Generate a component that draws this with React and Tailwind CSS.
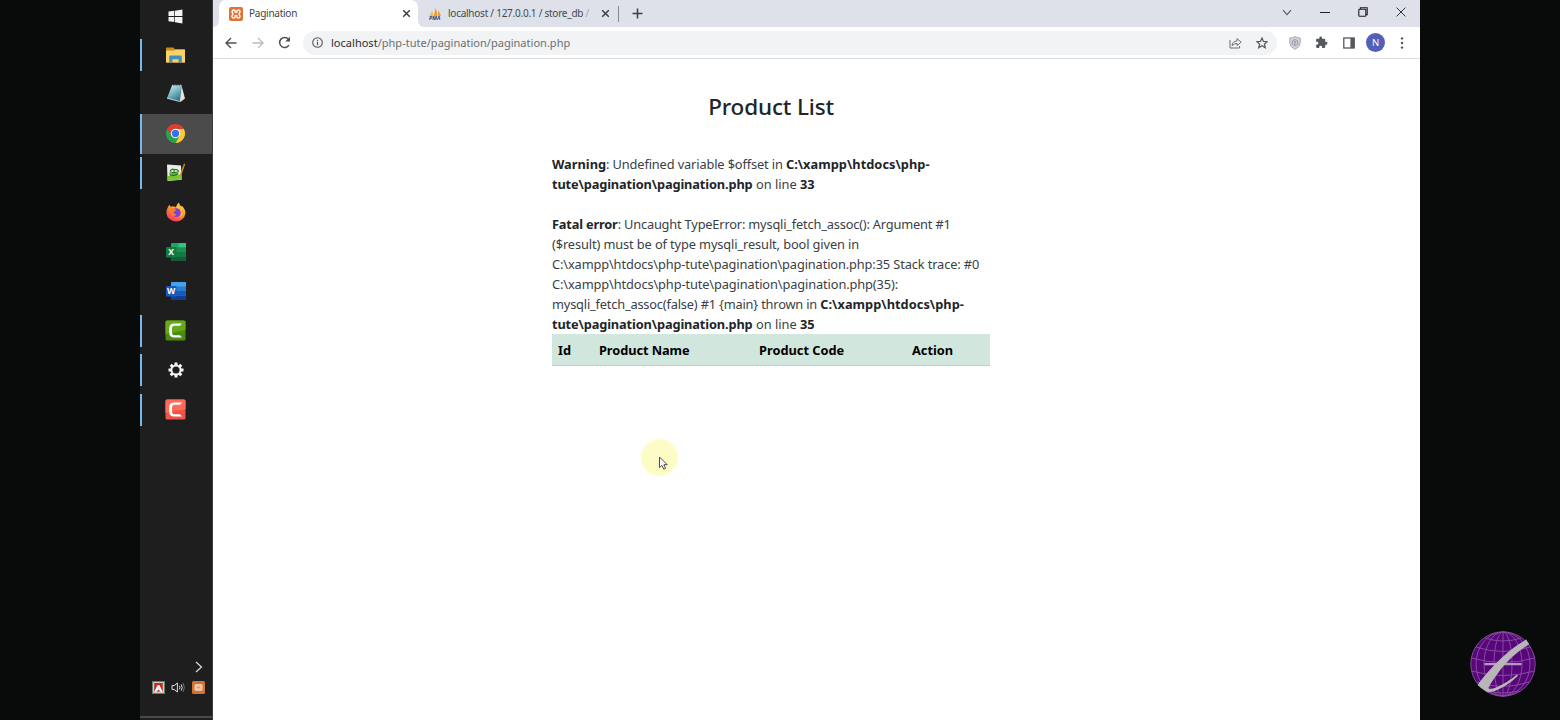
import React from "react";

/* ---------- taskbar icons ---------- */
const WindowsIcon = () => (
  <svg className="h-[15px] w-[15px]" viewBox="0 0 15 15" fill="#f4f4f4">
    <path d="M0.5 2.6 6.3 1.8V7.1H0.5zM7 1.7 14.4.6V7.1H7zM0.5 7.9H6.3V13.1L0.5 12.3zM7 7.9H14.4V14.4L7 13.3z" />
  </svg>
);
const ExplorerIcon = () => (
  <svg className="h-4 w-[19px]" viewBox="0 0 19 16">
    <path d="M0 1.2Q0 .4.8.4H7.4L9.2 2.4H18.2Q19 2.4 19 3.2V15.4H0z" fill="#c98a1c" />
    <path d="M0 3.6H8.2L9.6 2.4H19V15.4H0z" fill="#fad265" />
    <path d="M3.2 15.6V9.8Q3.2 8.4 4.6 8.4H14.4Q15.8 8.4 15.8 9.8V15.6H12.6V12.2H6.4V15.6z" fill="#3f8fc4" />
  </svg>
);
const NotepadIcon = () => (
  <svg className="h-[19px] w-5" viewBox="0 0 20 19">
    <defs>
      <linearGradient id="pad" x1="0" y1="0" x2=".6" y2="1">
        <stop offset="0" stopColor="#d8f0f4" />
        <stop offset=".5" stopColor="#7fb9c6" />
        <stop offset="1" stopColor="#2f7486" />
      </linearGradient>
    </defs>
    <path d="M15.6 1.8 19 14.6 14.4 18 13 15z" fill="#e7e2d6" />
    <path d="M6 1.5 16 1.8 13.8 17.5 1 14.2z" fill="url(#pad)" />
    <path d="M1 14.2 13.8 17.5" stroke="#cfe0e2" strokeWidth=".9" />
    <path d="M6 1.4H16" stroke="#b9c6c8" strokeWidth="1.2" strokeDasharray="1 .6" />
  </svg>
);
const ChromeIcon = () => (
  <svg className="h-[19px] w-[19px]" viewBox="0 0 48 48">
    <path d="M3.2 12A24 24 0 0 0 24 48L34.4 30 24 24z" fill="#2ba24c" />
    <path d="M44.8 12A24 24 0 0 1 24 48L34.4 30 24 12z" fill="#fcc934" />
    <path d="M3.2 12 13.6 30 24 24 24 12H44.8A24 24 0 0 0 3.2 12z" fill="#e33b2e" />
    <circle cx="24" cy="24" r="12" fill="#fff" />
    <circle cx="24" cy="24" r="9.3" fill="#2f76e8" />
  </svg>
);
const NotepadPlusIcon = () => (
  <svg className="h-[19px] w-5" viewBox="0 0 20 19">
    <path d="M1 1.4 15 2.4 15.6 16.8 1.6 18z" fill="#e9efe4" />
    <path d="M1.5 13 15.4 11.5 15.6 16.6 1.7 17.700z" fill="#7cc62c" />
    <path d="M3.4 9.500Q4 5.400 7.500 6 12.600 5.500 12.500 9.400 12.800 13.200 9 13.600 5 14.600 3.400 12z" fill="#6cb944" />
    <path d="M4 7.600Q7 4.600 9 6.800 12 5.600 12.600 8.800M4 11.800Q8 13.800 12 10.800M6 9.600H10.500" stroke="#23602a" strokeWidth="1" fill="none" />
    <circle cx="6.400" cy="8.200" r=".9" fill="#eaf6dc" />
    <circle cx="9.900" cy="8.200" r=".9" fill="#eaf6dc" />
    <path d="M18.6 .8 14.400 12.8" stroke="#c98a2b" strokeWidth="1.400" />
  </svg>
);
const FirefoxIcon = () => (
  <svg className="h-5 w-5" viewBox="0 0 20 20">
    <defs>
      <linearGradient id="fox" x1=".85" y1="0" x2=".25" y2="1">
        <stop offset="0" stopColor="#ffe14a" />
        <stop offset=".45" stopColor="#ff9a2a" />
        <stop offset="1" stopColor="#f5325b" />
      </linearGradient>
    </defs>
    <path d="M2.2 4.6Q2.5 3.6 3.4 2.7 3.9 4 5 4.8 6.4 4 7.8 4.6 9.6 4.8 10 5.4 10.6 1.8 13 .4 13.2 2.8 15.3 4.4L16 3.8Q19.6 7.6 19.4 11.6A9.5 8.8 0 0 1 .5 11.4Q.3 7.6 2.2 4.6z" fill="url(#fox)" />
    <circle cx="10.4" cy="10.6" r="4.3" fill="#7b3fe0" />
    <path d="M4.4 6.4Q7.4 5.4 9.4 7.4 11 8 9.4 8.9 7.6 9 7.6 10.4 8 12.4 10.4 12.2 8.6 15.4 5.4 13.4 3.4 11 4.4 6.4z" fill="#ff7a2c" />
    <path d="M10 5.4Q14.6 5.8 15.2 10.6 15.4 13.6 13 15.4 17.8 13.4 16.2 8.4 14.4 4.6 13 2.6 10.6 3.4 10 5.4z" fill="#ffbf3a" />
  </svg>
);
const OfficeIcon = ({ letter, tones }) => (
  <svg className="h-5 w-5" viewBox="0 0 20 20">
    <rect x="5" y="1" width="15" height="18" rx="1" fill={tones[0]} />
    <rect x="12.5" y="1" width="7.5" height="4.5" fill={tones[1]} />
    <rect x="5" y="5.5" width="15" height="4.5" fill={tones[2]} />
    <rect x="5" y="10" width="15" height="4.5" fill={tones[3]} />
    <rect x="5" y="14.5" width="15" height="4.5" rx=".8" fill={tones[4]} />
    <rect x="0" y="5" width="10.5" height="10.4" rx=".9" fill={tones[5]} />
    <text x="5.2" y="13.4" textAnchor="middle" fontSize="8.6" fontWeight="700" fill="#fff" fontFamily="Open Sans, sans-serif">{letter}</text>
  </svg>
);
const EXCEL = ["#21a366", "#33c481", "#1a9058", "#107c41", "#185c37", "#107c41"];
const WORD = ["#41a5ee", "#41a5ee", "#2b7cd3", "#185abd", "#103f91", "#185abd"];
const CamtasiaIcon = ({ from, to }) => (
  <svg className="h-[21px] w-[21px]" viewBox="0 0 21 21">
    <rect x=".5" y=".5" width="20" height="20" rx="1.6" fill={to} />
    <path d="M2.1.5H18.9Q20.5.5 20.5 2.1V10L.5 14V2.1Q.5.5 2.1.5z" fill={from} />
    <path d="M17 3.400H9.200Q4.200 3.400 4.200 8.400V12.600Q4.200 17.600 9.200 17.600H17L15 15.200H9.800Q7 15.200 7 12.400V8.600Q7 5.800 9.800 5.800H15z" fill="#fff" />
  </svg>
);
const GearIcon = () => (
  <svg className="h-4 w-4" viewBox="0 0 16 16" fill="none" stroke="#f6f6f6">
    <circle cx="8" cy="8" r="4.600" strokeWidth="2" />
    <path d="M8 .5V3.200M8 12.800V15.500M.5 8H3.200M12.800 8H15.500M2.700 2.700 4.600 4.600M11.400 11.400 13.300 13.300M2.700 13.300 4.600 11.400M11.400 4.600 13.300 2.700" strokeWidth="3" />
  </svg>
);

const TASKS = [
  { icon: <ExplorerIcon />, open: true },
  { icon: <NotepadIcon /> },
  { icon: <ChromeIcon />, active: true },
  { icon: <NotepadPlusIcon />, open: true },
  { icon: <FirefoxIcon /> },
  { icon: <OfficeIcon letter="X" tones={EXCEL} /> },
  { icon: <OfficeIcon letter="W" tones={WORD} /> },
  { icon: <CamtasiaIcon from="#65a818" to="#4a8c10" />, open: true },
  { icon: <GearIcon />, open: true },
  { icon: <CamtasiaIcon from="#ff6b5a" to="#ee5546" />, open: true },
];

function Taskbar() {
  return (
    <aside className="flex w-[73px] shrink-0 flex-col border-r border-[#3b3b3b] bg-[#1e1e1e]">
      <div className="flex h-[35.4px] shrink-0 items-center justify-center pr-px pb-[3px]">
        <WindowsIcon />
      </div>
      {TASKS.map((t, i) => (
        <div key={i} className={t.active ? "flex h-[39.4px] shrink-0 items-center bg-[#4b4b4b]" : "flex h-[39.4px] shrink-0 items-center"}>
          <div className={t.active ? "h-full w-[2px] bg-[#76b9ed]" : t.open ? "h-8 w-[2px] bg-[#76b9ed]" : "h-8 w-[2px]"} />
          <div className="flex flex-1 justify-center pr-[3px] pb-px">{t.icon}</div>
        </div>
      ))}
      <div className="mt-auto flex flex-col">
        <svg className="ml-[54px] h-3 w-[9px]" viewBox="0 0 9 12" fill="none" stroke="#dcdcdc" strokeWidth="1.2"><path d="M2 1 7.500 6 2 11" /></svg>
        <div className="mt-[8px] flex items-center pl-3">
          <svg className="h-[13px] w-[13px]" viewBox="0 0 13 13">
            <rect width="13" height="13" fill="#4e8a6c" />
            <rect x="1.2" y="1.2" width="10.6" height="10.6" fill="#f1dcda" />
            <path d="M2.2 2H10.800V10.600H2.200z" fill="#c9262c" />
            <path d="M2.400 10.800 5.400 4.200H7.600L10.600 10.800H8.600L6.500 8.400 4.400 10.800z" fill="#fff" />
          </svg>
          <svg className="ml-[6px] h-[13px] w-[15px]" viewBox="0 0 15 13" fill="none" stroke="#dedede" strokeWidth="1">
            <path d="M1 4.6H3.2L6.4 2V11L3.2 8.4H1z" />
            <path d="M8.4 4.8Q9.6 6.5 8.4 8.2M10.2 3.4Q12.2 6.5 10.2 9.6" />
            <path d="M12 2Q14.8 6.5 12 11" stroke="#707070" />
          </svg>
          <svg className="ml-[6px] h-[13px] w-[13px]" viewBox="0 0 13 13">
            <rect width="13" height="13" rx="1.5" fill="#cf7437" />
            <rect x="2.4" y="3" width="8.2" height="7" rx="1.6" fill="#efc3a2" />
            <path d="M5.2 6.5H7.8" stroke="#dd9562" strokeWidth="1.2" />
          </svg>
        </div>
        <div className="mt-[22px] h-[2px] bg-[#4a4a4a]" />
        <div className="h-[2px]" />
      </div>
    </aside>
  );
}

/* ---------- browser chrome ---------- */
const XamppIcon = () => (
  <svg className="h-[14px] w-[14px]" viewBox="0 0 14 14">
    <rect width="14" height="14" rx="2" fill="#df7436" />
    <path d="M4.700 3A1.700 1.700 0 0 0 3.600 6Q4.400 7 3.600 8A1.700 1.700 0 1 0 6.200 10V8.600H7.800V10A1.700 1.700 0 1 0 10.400 8Q9.600 7 10.400 6A1.700 1.700 0 1 0 7.800 4V5.400H6.200V4A1.500 1.500 0 0 0 4.700 3z" fill="none" stroke="#fff" strokeWidth="1.300" />
  </svg>
);
const PmaIcon = () => (
  <svg className="h-[14px] w-[14px]" viewBox="0 0 14 14">
    <path d="M1 9.4Q3.6 7 4 3.2 5.2 5.6 4.8 9z" fill="#f5b35c" />
    <path d="M5 9.4Q7.4 6 6.8 1 9.6 4.4 9.2 9.2z" fill="#f29a2c" />
    <path d="M9.8 9.2Q10.6 6 10 3.2 12.6 6 12.8 9z" fill="#f29a2c" />
    <text x="6.800" y="13" textAnchor="middle" fontSize="5.400" fontWeight="700" fontStyle="italic" fill="#3f3d63" fontFamily="Open Sans, sans-serif">PMA</text>
  </svg>
);
const Cross = () => (
  <svg className="h-[9px] w-[9px]" viewBox="0 0 9 9" stroke="#3c4043" strokeWidth="1.5"><path d="M1.2 1.2 7.8 7.8M7.8 1.2 1.2 7.8" /></svg>
);

function TabStrip() {
  return (
    <div className="flex h-[27px] bg-[#dee1ea]">
      <div className="flex w-[6px] items-end bg-white"><div className="h-full w-full rounded-br-[6px] bg-[#dee1ea]" /></div>
      <div className="flex w-[199px] items-center rounded-t-[7px] bg-white pl-[10px]">
        <XamppIcon />
        <span className="ml-[6px] pb-px text-[10px] leading-[14px] tracking-[-0.25px] text-[#3f4347]">Pagination</span>
        <span className="mr-[7px] ml-auto"><Cross /></span>
      </div>
      <div className="flex w-[6px] bg-white"><div className="h-full w-full rounded-bl-[6px] bg-[#dee1ea]" /></div>
      <div className="flex flex-1 items-center">
        <span className="ml-[4px]"><PmaIcon /></span>
        <span className="ml-[6px] w-[143px] pb-px text-[10px] leading-[14px] tracking-[-0.25px] whitespace-nowrap text-[#45494d]">
          localhost / 127.0.0.1 / store_db <span className="text-[#a3a6ad]">/</span>
        </span>
        <span className="ml-[10px]"><Cross /></span>
        <span className="ml-[8px] h-4 w-px bg-[#85888e]" />
        <svg className="ml-[13px] h-[11px] w-[11px]" viewBox="0 0 11 11" stroke="#3c4043" strokeWidth="1.5"><path d="M5.5.5V10.5M.5 5.5H10.5" /></svg>
        <div className="mr-[14px] ml-auto flex items-center pb-[3px]">
          <svg className="h-[7px] w-[10px]" viewBox="0 0 10 7" fill="none" stroke="#55585e" strokeWidth="1.1"><path d="M1 1.2 5 5.6 9 1.2" /></svg>
          <span className="ml-[28px] h-px w-[10px] bg-[#222]" />
          <svg className="ml-[28px] h-[10px] w-[10px]" viewBox="0 0 10 10" fill="none" stroke="#1b1b1b" strokeWidth="1.1"><rect x=".8" y="2.2" width="7" height="7" rx=".8" /><path d="M2.4 2V.8H9.2V7.8H8" /></svg>
          <svg className="ml-[28px] h-[10px] w-[10px]" viewBox="0 0 10 10" stroke="#333" strokeWidth="1"><path d="M.6.6 9.4 9.4M9.4.6.6 9.4" /></svg>
        </div>
      </div>
    </div>
  );
}

function Toolbar() {
  return (
    <div className="flex h-8 items-center border-b border-[#dcdde0] bg-white pl-[12px]">
      <svg className="h-3 w-3" viewBox="0 0 12 12" fill="none" stroke="#4c4f54" strokeWidth="1.4"><path d="M11.5 6H1.2M6 1 1 6 6 11" /></svg>
      <svg className="ml-[15px] h-3 w-3" viewBox="0 0 12 12" fill="none" stroke="#b9bbbf" strokeWidth="1.3"><path d="M.5 6H10.8M6 1 11 6 6 11" /></svg>
      <svg className="ml-[14px] h-[13px] w-[13px]" viewBox="0 0 13 13"><path d="M10.9 9.2A5 5 0 1 1 10.4 3.2" fill="none" stroke="#4c4f54" strokeWidth="1.5" /><path d="M12 .8V5.6H7.2z" fill="#4c4f54" /></svg>
      <div className="ml-[12px] flex h-6 w-[974px] items-center rounded-full bg-[#f1f3f4] pl-[9px]">
        <svg className="h-[11px] w-[11px]" viewBox="0 0 11 11"><circle cx="5.5" cy="5.5" r="4.8" fill="none" stroke="#55585d" strokeWidth="1.1" /><path d="M5.5 4.8V8.2M5.5 2.7V3.9" stroke="#55585d" strokeWidth="1.2" /></svg>
        <span className="ml-[8px] text-[11px] leading-4 tracking-[0.02px] whitespace-nowrap text-[#6b6f74]"><span className="text-[#2b2e31]">localhost</span>/php-tute/pagination/pagination.php</span>
        <svg className="mr-[14px] ml-auto h-3 w-[13px]" viewBox="0 0 13 12" fill="none" stroke="#6c6f74" strokeWidth="1"><path d="M1 3V11H10.6V9" /><path d="M3 8.6Q3.4 4.2 8 4V1.6L12.2 5.2 8 8.6V6.4Q5 6.4 3 8.6z" strokeLinejoin="round" /></svg>
        <svg className="mr-[9px] h-[12px] w-[12px]" viewBox="0 0 12 12" fill="none" stroke="#54575c" strokeWidth="1.2"><path d="M6 1 7.5 4.4 11.2 4.7 8.4 7.1 9.3 10.8 6 8.8 2.7 10.8 3.6 7.1.8 4.7 4.5 4.4z" /></svg>
      </div>
      <svg className="ml-[12px] h-[14px] w-[12px]" viewBox="0 0 12 14"><path d="M6 .6Q8.4 2 11.2 2V7Q11 11 6 13.4 1 11 .8 7V2Q3.6 2 6 .6z" fill="#d2d4dc" stroke="#a6a9b5" strokeWidth="1" /><circle cx="6" cy="6.6" r="2.9" fill="none" stroke="#8f93a1" strokeWidth=".9" /><path d="M6 5V9M4.6 6H7.4" stroke="#8f93a1" strokeWidth=".9" /></svg>
      <svg className="ml-[14px] h-[13px] w-[13px]" viewBox="0 0 24 24" fill="#55585d"><path d="M20.5 11H19V7c0-1.100-.9-2-2-2h-4V3.500a2.500 2.500 0 0 0-5 0V5H4c-1.100 0-2 .9-2 2v3.800h1.500a2.700 2.700 0 0 1 0 5.400H2V20c0 1.100.9 2 2 2h3.800v-1.500a2.700 2.700 0 0 1 5.400 0V22H17c1.100 0 2-.9 2-2v-4h1.500a2.500 2.500 0 0 0 0-5z" /></svg>
      <svg className="ml-[15px] h-3 w-3" viewBox="0 0 12 12"><rect x=".8" y="1" width="10.4" height="10" fill="none" stroke="#55585d" strokeWidth="1.3" /><rect x="7.4" y="1" width="4" height="10" fill="#55585d" /></svg>
      <div className="ml-[11px] flex h-[19px] w-[19px] items-center justify-center rounded-full bg-[#5360b5] text-[9.5px] leading-none text-white">N</div>
      <svg className="ml-[15px] h-3 w-[4px]" viewBox="0 0 4 12" fill="#505358"><circle cx="2" cy="1.4" r="1.2" /><circle cx="2" cy="6" r="1.2" /><circle cx="2" cy="10.600" r="1.2" /></svg>
    </div>
  );
}

/* ---------- page ---------- */
const ScriptPath = () => <b className="tracking-[0.03px]">C:\xampp\htdocs\php-</b>;
const LineRef = ({ line }) => (
  <div><b className="tracking-[-0.13px]">tute\pagination\pagination.php</b> on line <b>{line}</b></div>
);

function Page() {
  return (
    <main className="relative flex-1 bg-white">
      <div className="ml-[339px] flex w-[438px] flex-col text-[#212529]">
        <h1 className="mt-[33px] text-center text-[22.5px] leading-[30px] font-medium tracking-[-0.17px]">Product List</h1>
        <div className="mt-8 text-[12.8px] leading-5 whitespace-nowrap text-[#3a4046] [&_b]:text-[#212529]">
          <div className="tracking-[-0.13px]"><b className="tracking-normal">Warning</b>: Undefined variable $offset in <ScriptPath /></div>
          <LineRef line={33} />
          <div className="h-5" />
          <div className="tracking-[-0.18px]"><b>Fatal error</b>: Uncaught TypeError: mysqli_fetch_assoc(): Argument #1</div>
          <div className="tracking-[-0.11px]">($result) must be of type mysqli_result, bool given in</div>
          <div className="tracking-[-0.12px]">C:\xampp\htdocs\php-tute\pagination\pagination.php:35 Stack trace: #0</div>
          <div className="tracking-[-0.11px]">C:\xampp\htdocs\php-tute\pagination\pagination.php(35):</div>
          <div className="tracking-[-0.18px]">mysqli_fetch_assoc(false) #1 {"{main}"} thrown in <ScriptPath /></div>
          <LineRef line={35} />
        </div>
        <div className="grid h-8 grid-cols-[40px_161px_153px_84px] items-center border-b border-[#bcd0c7] bg-[#d1e7dd] pt-[2px] text-[12.8px] font-bold text-black">
          <span className="pl-[6px]">Id</span>
          <span className="pl-[7px] tracking-[-0.08px]">Product Name</span>
          <span className="pl-[6px]">Product Code</span>
          <span className="pl-[6px]">Action</span>
        </div>
      </div>
      <div className="absolute top-[380px] left-[428px] h-[37px] w-[37px] rounded-full bg-[#fdfcc4] blur-[0.8px]" />
      <svg className="absolute top-[397px] left-[446px] h-[15px] w-[10px]" viewBox="0 0 10 15"><path d="M.5 1V11.500L3 9.400 4.800 13.200 6.600 12.300 4.900 8.700H8.200z" fill="#fff" stroke="#3c3a36" strokeWidth=".9" /></svg>
    </main>
  );
}

const Globe = () => (
  <svg className="absolute right-[23px] bottom-[22px] h-[68px] w-[68px]" viewBox="0 0 68 68">
    <circle cx="34" cy="34" r="32" fill="#57077a" />
    <g fill="none" stroke="#864a9f" strokeWidth="1">
      <circle cx="34" cy="34" r="32.2" />
      <ellipse cx="34" cy="34" rx="9" ry="32" />
      <ellipse cx="34" cy="34" rx="19" ry="32" />
      <ellipse cx="34" cy="34" rx="27" ry="32" />
      <path d="M34 2V66M16 8Q34 14 52 8M7 17Q34 26 61 17M2.500 28Q34 37 65.500 28M2.500 41Q34 50 65.500 41M8 52Q34 61 60 52M18 61Q34 65 50 61" />
    </g>
    <path d="M15.500 33H52.500V35.300H15.500z" fill="#b39bbd" />
    <path d="M57.200 9.600 60.200 14.200Q44 24 32 39 20.500 54.500 19.500 58 20.500 60.200 28 57 38 53 48 44.600L48.800 46Q39 55.500 26 61 19.500 63 17.500 61.500 12 58.500 8.600 55 14 47 24 36.500 40 19 57.200 9.600z" fill="#b9b6b9" />
  </svg>
);

export default function App() {
  return (
    <div className="relative flex h-[720px] w-[1560px] overflow-hidden bg-[#090b0a] pl-[140px] font-['Noto_Sans',sans-serif]">
      <Taskbar />
      <div className="flex w-[1207px] flex-col">
        <TabStrip />
        <Toolbar />
        <Page />
      </div>
      <Globe />
    </div>
  );
}
